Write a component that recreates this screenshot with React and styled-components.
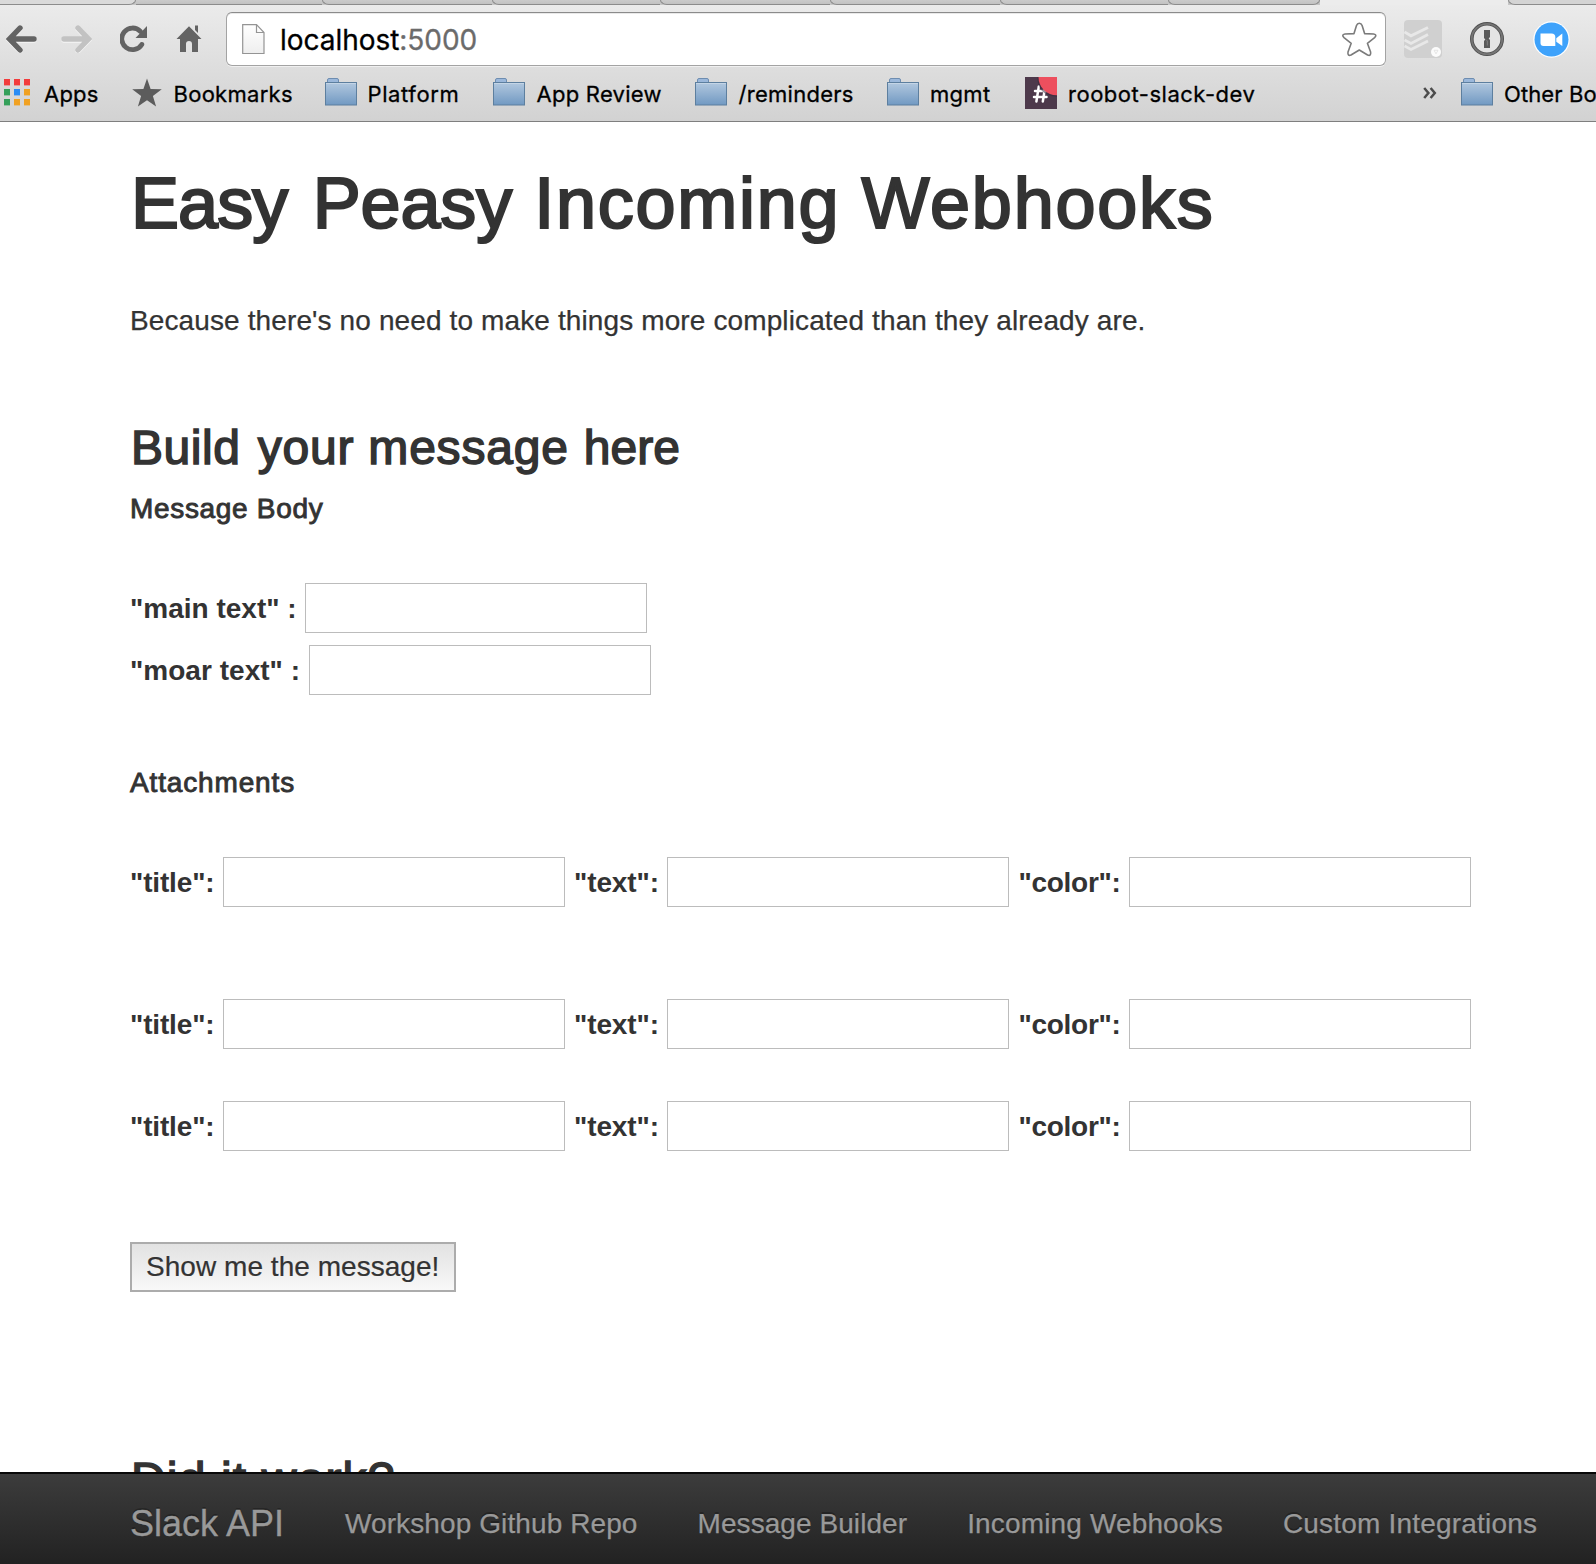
import React from "react";
import styled, { createGlobalStyle } from "styled-components";

const Global = createGlobalStyle`
  html, body { margin: 0; padding: 0; background: #fff; }
  * { box-sizing: border-box; }
  body { overflow: hidden; }
`;

const UI_FONT = 'Inter, "Noto Sans", sans-serif';
const PAGE_FONT = '"Liberation Sans", Arial, sans-serif';

const Window = styled.div`
  display: flex;
  flex-direction: column;
  width: 1596px;
  height: 1564px;
  overflow: hidden;
  background: #fff;
`;

/* ---------- browser chrome ---------- */

const TabStrip = styled.div`
  display: flex;
  flex: none;
  height: 5px;
  background: #c6c6c6;
`;

const Tab = styled.div`
  flex: none;
  width: ${(p) => p.$w}px;
  height: 5px;
  background: ${(p) => p.$bg || "linear-gradient(#cbcbcb, #c2c2c2)"};
  border: 0 solid #8c8c8c;
  border-bottom-width: 1px;
  border-left-width: ${(p) => (p.$left ? 1 : 0)}px;
  border-right-width: ${(p) => (p.$right ? 1 : 0)}px;
  border-bottom-left-radius: ${(p) => (p.$left ? "7px 5px" : "0")};
  border-bottom-right-radius: ${(p) => (p.$right ? "7px 5px" : "0")};
`;

const ActiveTab = styled.div`
  flex: none;
  width: 188px;
  height: 5px;
  background: #ececec;
`;

const Chrome = styled.div`
  display: flex;
  flex-direction: column;
  flex: none;
  height: 117px;
  background: linear-gradient(#ebebeb, #d2d2d2);
  border-bottom: 1px solid #7f7f7f;
`;

const NavBar = styled.div`
  display: flex;
  align-items: center;
  flex: none;
  height: 54px;
  margin-top: 7px;
`;

const NavIcon = styled.div`
  display: flex;
  flex: none;
  width: ${(p) => p.$w}px;
  margin-left: ${(p) => p.$ml || 0}px;
`;

const Omnibox = styled.div`
  display: flex;
  align-items: center;
  flex: none;
  width: 1160px;
  height: 54px;
  margin-left: 24px;
  padding: 0 8px 0 15px;
  background: #fff;
  border: 1px solid #a3a3a3;
  border-top-color: #8b8b8b;
  border-radius: 6px;
  box-shadow: inset 0 1px 0 #e9e9e9, 0 1px 0 #f0f0f0;
`;

const Url = styled.div`
  flex: 1;
  margin-left: 15px;
  padding-top: 2px;
  font: 28px/40px ${UI_FONT};
  letter-spacing: -0.04px;
  color: #000;
  white-space: nowrap;
  -webkit-text-stroke: 0.3px;
`;

const Port = styled.span`
  color: #6b6b6b;
`;

const Bookmarks = styled.div`
  display: flex;
  align-items: center;
  height: 50px;
  padding: 3px 0 0 4px;
  font: 22px/30px ${UI_FONT};
  color: #000;
  white-space: nowrap;
  -webkit-text-stroke: 0.3px;
`;

const Bookmark = styled.div`
  display: flex;
  align-items: center;
  flex: none;
  gap: ${(p) => p.$gap || 11}px;
  width: ${(p) => p.$w}px;
  letter-spacing: ${(p) => p.$ls || 0}px;
  svg { flex: none; display: block; }
`;

const BookmarkName = styled.span`
  padding-top: 2px;
`;

/* ---------- page ---------- */

const Page = styled.main`
  display: flex;
  flex-direction: column;
  flex: none;
  height: 1350px;
  padding-left: 130px;
  overflow: hidden;
  font: 28px/40px ${PAGE_FONT};
  color: #333;
  white-space: nowrap;
`;

const Title = styled.h1`
  flex: none;
  margin: 41px 0 0 1px;
  font-size: 72px;
  line-height: 80px;
  font-weight: 400;
  letter-spacing: 1.19px;
  -webkit-text-stroke: 2.2px #333;
`;

const Word = styled.span`
  margin-left: ${(p) => p.$ml || 0}px;
  letter-spacing: ${(p) => p.$ls}px;
`;

const Lead = styled.p`
  flex: none;
  margin: 58px 0 0;
  letter-spacing: 0.12px;
  -webkit-text-stroke: 0.25px #333;
`;

const Heading = styled.h2`
  flex: none;
  margin: ${(p) => p.$mt}px 0 0 1px;
  font-size: 48px;
  line-height: 52px;
  font-weight: 400;
  letter-spacing: ${(p) => p.$ls}px;
  -webkit-text-stroke: 1.5px #333;
`;

const SubHeading = styled.h4`
  flex: none;
  margin: ${(p) => p.$mt}px 0 0;
  font-size: 28px;
  line-height: 30px;
  font-weight: 400;
  letter-spacing: ${(p) => p.$ls}px;
  -webkit-text-stroke: 0.9px #333;
`;

const FormRow = styled.div`
  display: flex;
  align-items: center;
  flex: none;
  height: 50px;
  margin-top: ${(p) => p.$mt}px;
`;

const Label = styled.label`
  flex: none;
  width: ${(p) => p.$w}px;
  padding-top: 2px;
  padding-left: ${(p) => p.$pl || 0}px;
  font-weight: 700;
  letter-spacing: ${(p) => p.$ls || 0}px;
`;

const Field = styled.input`
  flex: none;
  width: 342px;
  height: 50px;
  margin: 0;
  padding: 2px 6px;
  font: 28px ${PAGE_FONT};
  background: #fff;
  border: 1px solid #bcbcbc;
  border-radius: 0;
  outline: none;
`;

const Submit = styled.button`
  flex: none;
  width: 326px;
  height: 50px;
  margin: 91px 0 0;
  padding: 0 0 0 14px;
  text-align: left;
  font: 28px/44px ${PAGE_FONT};
  letter-spacing: 0.04px;
  color: #333;
  background: linear-gradient(#e2e2e2, #f8f8f8);
  border: 2px solid #acacac;
  border-radius: 0;
  -webkit-text-stroke: 0.2px #333;
`;

const Footer = styled.nav`
  display: flex;
  align-items: center;
  flex: none;
  height: 92px;
  padding: 10px 0 0 130px;
  background: linear-gradient(#3c3c3c, #222);
  border-top: 2px solid #080808;
  font: 28px/40px ${PAGE_FONT};
  color: #999;
  text-shadow: 0 -2px 0 rgba(0, 0, 0, 0.25);
  white-space: nowrap;
`;

const Brand = styled.a`
  flex: none;
  width: 215px;
  font-size: 36px;
  -webkit-text-stroke: 0.3px #999;
`;

const Links = styled.div`
  display: flex;
  gap: 60px;
`;

const FooterLink = styled.a`
  flex: none;
  letter-spacing: ${(p) => p.$ls}px;
  -webkit-text-stroke: 0.25px #999;
`;

/* ---------- icons ---------- */

const ArrowIcon = ({ color, flip }) => (
  <svg width="31" height="28" viewBox="0 0 31 28" transform={flip ? "scale(-1 1)" : undefined}>
    <path d="M14 3 L3.5 14 L14 25 M4 14 H28" transform="translate(0 1)" fill="none" stroke="#f6f6f6" strokeWidth="5.4" strokeLinecap="round" />
    <path d="M14 3 L3.5 14 L14 25 M4 14 H28" fill="none" stroke={color} strokeWidth="5.4" strokeLinecap="round" />
  </svg>
);

const ReloadIcon = () => (
  <svg width="28" height="28" viewBox="0 0 28 28">
    <path d="M21.8 19.4 A10.8 10.8 0 1 1 20.2 6.2" fill="none" stroke="#636363" strokeWidth="4.8" strokeLinecap="round" />
    <path d="M27 1 V13 H15.5 Z" fill="#636363" />
  </svg>
);

const HomeIcon = () => (
  <svg width="26" height="28" viewBox="0 0 26 28">
    <path d="M13 1.3 L25.5 14 H22 V27 H16 V19 Q16 16 13 16 Q10 16 10 19 V27 H4 V14 H0.5 Z" fill="#636363" />
    <path d="M19 0.5 H22 V8 L19 5 Z" fill="#636363" />
  </svg>
);

const PageIcon = () => (
  <svg width="23" height="31" viewBox="0 0 23 31">
    <defs>
      <linearGradient id="sheet" x1="0" y1="0" x2="0" y2="1">
        <stop offset="0" stopColor="#fff" />
        <stop offset="1" stopColor="#eee" />
      </linearGradient>
    </defs>
    <path d="M0.7 0.7 H14.5 L22 8.5 V29.5 H0.7 Z" fill="url(#sheet)" stroke="#949494" strokeWidth="1.2" />
    <path d="M14.5 0.7 V8.5 H22" fill="none" stroke="#949494" strokeWidth="1.2" />
  </svg>
);

const FavoriteIcon = () => (
  <svg width="36" height="35" viewBox="0 0 36 35">
    <path
      d="M18.3 1.3 Q20.3 1.3 21.1 3.6 L23.6 11.6 L32.6 12 Q36.5 12.8 33.6 15.6 L26.4 21.3 L29.6 30 Q30.2 34.4 26.6 33 L18.3 28 L10 33 Q6.4 34.4 7 30 L10.2 21.3 L3 15.6 Q0.1 12.8 4 12 L13 11.6 L15.5 3.6 Q16.3 1.3 18.3 1.3 Z"
      fill="#fff" stroke="#7b7b7b" strokeWidth="1.6" strokeLinejoin="round"
    />
  </svg>
);

const TodoistIcon = () => (
  <svg width="38" height="38" viewBox="0 0 38 38">
    <rect width="38" height="38" rx="4" fill="#d0d0d0" />
    <g fill="none" stroke="#e8e8e8" strokeWidth="2.8">
      <path d="M0.5 12 L7 15.8 L24 7.5" />
      <path d="M0.5 20 L7 23.5 L24 14.5" />
      <path d="M0.5 26 L7 29.5 L24 21" />
    </g>
    <circle cx="32" cy="32" r="5" fill="#fbfbfb" />
    <path d="M30 30.3 H34 L32 33.8 Z" fill="none" stroke="#e0e0e0" strokeWidth="0.8" />
  </svg>
);

const OnePasswordIcon = () => (
  <svg width="34" height="34" viewBox="0 0 34 34">
    <circle cx="17" cy="17" r="15.2" fill="#e4e4e4" stroke="#505050" strokeWidth="3.6" />
    <circle cx="17" cy="17" r="15.2" fill="none" stroke="#757575" strokeWidth="1.8" />
    <path d="M14 8 H20 V15 L18.7 16.5 L20 18 V26 H14 V19 L15.3 17.5 L14 16 Z" fill="#5a5a5a" />
    <path d="M16 17.6 L17.3 19 V23.5" fill="none" stroke="#8a8a8a" strokeWidth="0.8" />
  </svg>
);

const ZoomIcon = () => (
  <svg width="37" height="37" viewBox="0 0 37 37">
    <circle cx="18.5" cy="18.5" r="18.2" fill="#fff" />
    <circle cx="18.5" cy="18.5" r="17" fill="#3ea2fb" />
    <path d="M7.5 12.5 H18.5 Q22.3 12.5 22.3 16 V25 H10.5 Q7.5 25 7.5 22 Z" fill="#fff" />
    <path d="M23.3 17.3 L29.3 12.5 V25 L23.3 20.8 Z" fill="#fff" />
  </svg>
);

const APP_COLORS = ["#f23c3c", "#f23c3c", "#f23c3c", "#35a05a", "#2a8cf4", "#f0a122", "#35a05a", "#f0a122", "#f0a122"];

const AppsIcon = () => (
  <svg width="26" height="27" viewBox="0 0 26 27">
    {APP_COLORS.map((c, i) => (
      <rect key={i} x={(i % 3) * 10} y={Math.floor(i / 3) * 10} width="6" height="6.4" fill={c} />
    ))}
  </svg>
);

const StarIcon = () => (
  <svg width="30" height="30" viewBox="0 0 30 30">
    <path d="M15 0.5 L18.6 11 L29.8 11.2 L20.9 18 L24.1 28.6 L15 22.3 L5.9 28.6 L9.1 18 L0.2 11.2 L11.4 11 Z" fill="#5c5c5c" />
  </svg>
);

const FolderIcon = () => (
  <svg width="32" height="30" viewBox="0 0 32 30">
    <defs>
      <linearGradient id="folder" x1="0" y1="0" x2="0" y2="1">
        <stop offset="0" stopColor="#b2c8df" />
        <stop offset="1" stopColor="#7199c2" />
      </linearGradient>
    </defs>
    <path d="M2.5 5 V2 Q2.5 0.5 4 0.5 H12 Q13.5 0.5 13.5 2 V5" fill="#9bb8db" stroke="#6e8db0" />
    <rect x="0.5" y="4.5" width="31" height="22.5" fill="url(#folder)" stroke="#5d7f9f" />
    <path d="M1 5.5 H31" stroke="#c4d5e6" />
  </svg>
);

const HashIcon = () => (
  <svg width="32" height="32" viewBox="0 0 32 32">
    <rect width="32" height="32" fill="#4d394b" />
    <path d="M13.8 9.5 L11.4 24.5 M20 11 L17.8 24.5 M10 14 H22 M9 20 H21.5" stroke="#fff" strokeWidth="2.5" strokeLinecap="round" />
    <path d="M12.5 0 Q12 18.5 32 19.8 V0 Z" fill="#35263a" opacity="0.5" />
    <path d="M13.5 0 A18 18 0 0 0 32 18.3 V0 Z" fill="#ed4f5e" />
  </svg>
);

const ChevronsIcon = () => (
  <svg width="14" height="15" viewBox="0 0 14 15">
    <path d="M1.2 3 L5.4 8 L1.2 13 M7.6 3 L11.8 8 L7.6 13" fill="none" stroke="#4c4c4c" strokeWidth="2.5" />
  </svg>
);

/* ---------- composition ---------- */

const BOOKMARKS = [
  { name: "Apps", icon: AppsIcon, w: 128, gap: 14, ls: 0.2 },
  { name: "Bookmarks", icon: StarIcon, w: 193, gap: 11.5, ls: 0.28 },
  { name: "Platform", icon: FolderIcon, w: 168, gap: 10.5, ls: 0.6 },
  { name: "App Review", icon: FolderIcon, w: 202, gap: 11.5, ls: 0.25 },
  { name: "/reminders", icon: FolderIcon, w: 192, gap: 11.5, ls: 0.28 },
  { name: "mgmt", icon: FolderIcon, w: 138, gap: 11, ls: 0.3 },
  { name: "roobot-slack-dev", icon: HashIcon, w: 398, gap: 11, ls: 0.51 },
  { name: "", icon: ChevronsIcon, w: 38 },
  { name: "Other Bo", icon: FolderIcon, w: 135, gap: 11, ls: 0.1 },
];

const ATTACHMENT_OFFSETS = [59, 92, 52];

export default function App() {
  return (
    <Window>
      <Global />
      <TabStrip>
        <Tab $w={136} $right $bg="#dadada" />
        <Tab $w={186} />
        <Tab $w={170} $left />
        <Tab $w={168} $left />
        <Tab $w={170} $left />
        <Tab $w={170} $left />
        <Tab $w={168} $left />
        <Tab $w={152} $left $right />
        <ActiveTab />
        <Tab $w={88} $left $bg="#d4d4d4" />
      </TabStrip>
      <Chrome>
        <NavBar>
          <NavIcon $w={31} $ml={5.5}><ArrowIcon color="#636363" /></NavIcon>
          <NavIcon $w={31} $ml={24.5}><ArrowIcon color="#c2c2c2" flip /></NavIcon>
          <NavIcon $w={28} $ml={28}><ReloadIcon /></NavIcon>
          <NavIcon $w={26} $ml={28}><HomeIcon /></NavIcon>
          <Omnibox>
            <PageIcon />
            <Url>localhost<Port>:5000</Port></Url>
            <FavoriteIcon />
          </Omnibox>
          <NavIcon $w={38} $ml={18}><TodoistIcon /></NavIcon>
          <NavIcon $w={34} $ml={28}><OnePasswordIcon /></NavIcon>
          <NavIcon $w={37} $ml={28.5}><ZoomIcon /></NavIcon>
        </NavBar>
        <Bookmarks>
          {BOOKMARKS.map(({ name, icon: Icon, w, gap, ls }) => (
            <Bookmark key={name} $w={w} $gap={gap} $ls={ls}>
              <Icon />
              {name && <BookmarkName>{name}</BookmarkName>}
            </Bookmark>
          ))}
        </Bookmarks>
      </Chrome>

      <Page>
        <Title>
          <Word $ls={-0.9}>Easy</Word>{" "}
          <Word $ls={-0.15} $ml={4}>Peasy</Word>{" "}
          <Word $ls={1.75} $ml={1}>Incoming</Word>{" "}
          <Word $ls={1.76}>Webhooks</Word>
        </Title>
        <Lead>Because there's no need to make things more complicated than they already are.</Lead>
        <Heading $mt={81} $ls={0.8}>
          <Word $ls={0.55}>Build</Word>{" "}
          <Word $ls={0.8} $ml={3}>your</Word>{" "}
          <Word $ls={0.8}>message</Word>{" "}
          <Word $ls={0} $ml={1}>here</Word>
        </Heading>
        <SubHeading $mt={20} $ls={0.68}>Message Body</SubHeading>
        <FormRow $mt={59}>
          <Label $w={175}>"main text" :</Label>
          <Field />
        </FormRow>
        <FormRow $mt={12}>
          <Label $w={179} $ls={0.03}>"moar text" :</Label>
          <Field />
        </FormRow>
        <SubHeading $mt={73} $ls={0.85}>Attachments</SubHeading>
        {ATTACHMENT_OFFSETS.map((mt) => (
          <FormRow key={mt} $mt={mt}>
            <Label $w={93} $ls={-0.15}>"title":</Label>
            <Field />
            <Label $w={102} $pl={9} $ls={-0.1}>"text":</Label>
            <Field />
            <Label $w={120} $pl={9.5} $ls={-0.28}>"color":</Label>
            <Field />
          </FormRow>
        ))}
        <Submit>Show me the message!</Submit>
        <Heading $mt={162} $ls={1.15}>Did it work?</Heading>
      </Page>

      <Footer>
        <Brand>Slack API</Brand>
        <Links>
          <FooterLink $ls={0.1}>Workshop Github Repo</FooterLink>
          <FooterLink $ls={0.07}>Message Builder</FooterLink>
          <FooterLink $ls={0.15}>Incoming Webhooks</FooterLink>
          <FooterLink $ls={0.2}>Custom Integrations</FooterLink>
        </Links>
      </Footer>
    </Window>
  );
}
